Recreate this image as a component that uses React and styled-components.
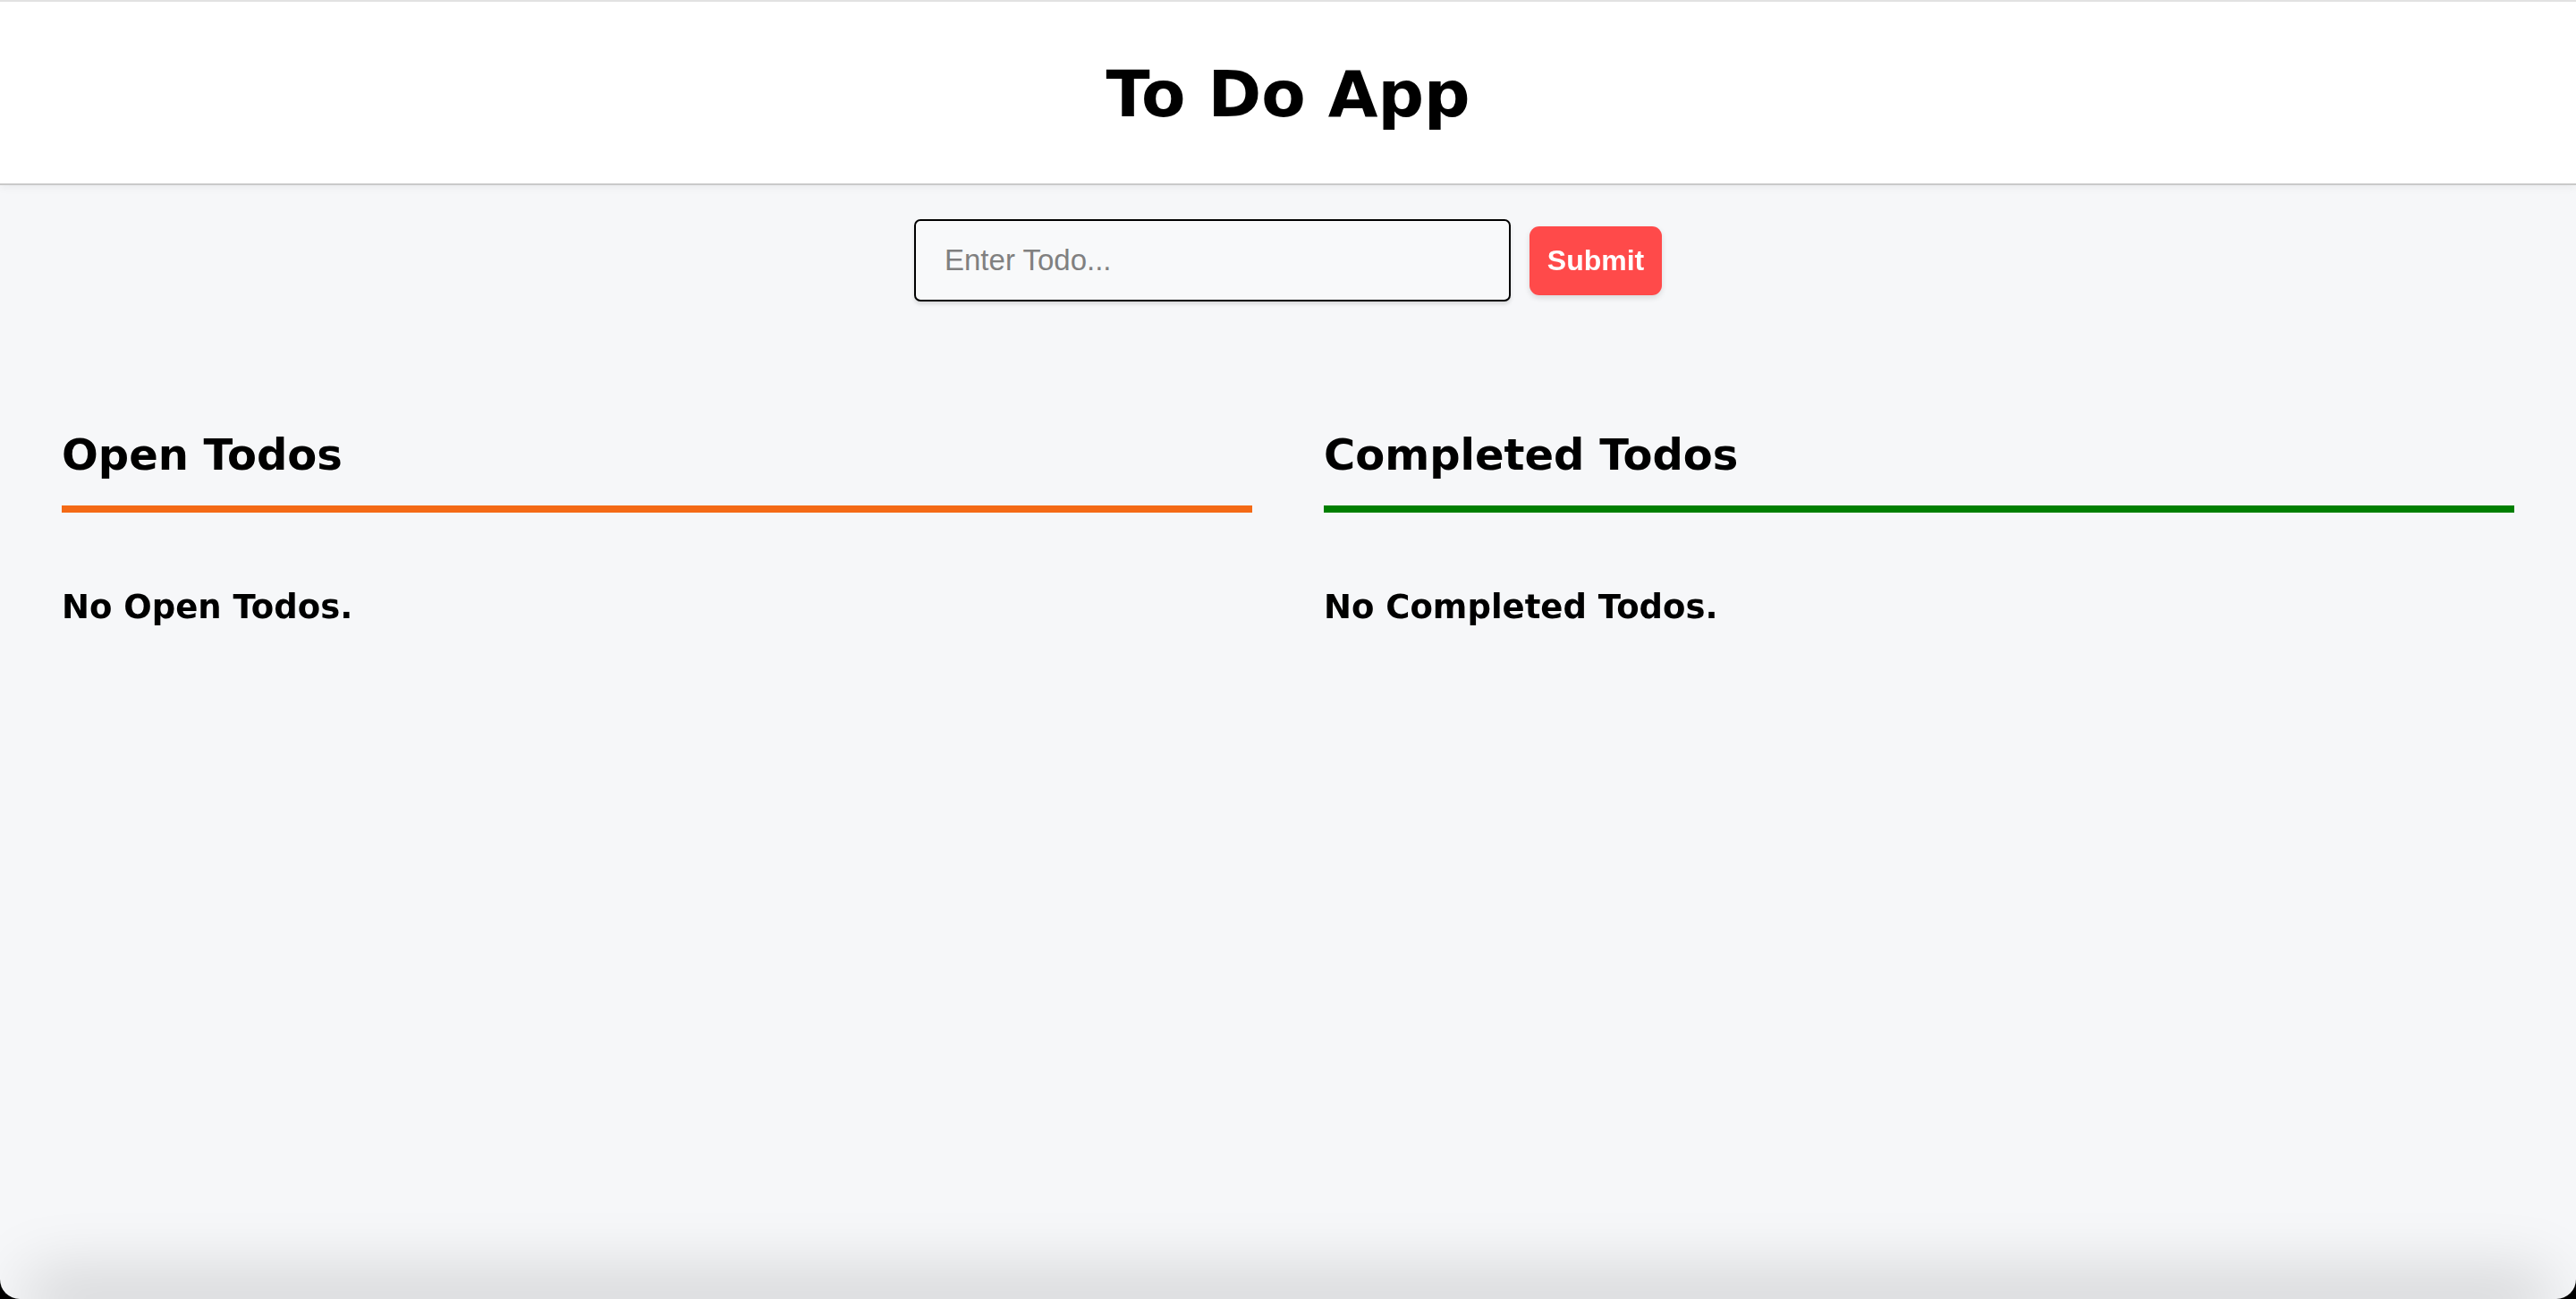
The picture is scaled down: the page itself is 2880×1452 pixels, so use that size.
import React from "react";
import styled, { createGlobalStyle } from "styled-components";

const GlobalStyle = createGlobalStyle`
  html, body {
    margin: 0;
    padding: 0;
    background: #000;
  }
  #root {
    min-height: 100vh;
  }
  * { box-sizing: border-box; }
`;

const Page = styled.div`
  min-height: 100vh;
  display: flex;
  flex-direction: column;
  background: #f6f7f9;
  border-radius: 0 0 22px 22px;
  overflow: hidden;
  font-family: "DejaVu Sans", Verdana, sans-serif;
  color: #000;
`;

const Header = styled.header`
  background: #fff;
  border-top: 2px solid #e2e2e2;
  height: 205px;
  padding-top: 67px;
  box-shadow: 0 2px 0 #c9c9c9, 0 4px 10px rgba(0, 0, 0, 0.06);
  position: relative;
  z-index: 1;
`;

const Title = styled.h1`
  margin: 0;
  text-align: center;
  font-size: 72px;
  line-height: 1;
  font-weight: 700;
`;

const Main = styled.main`
  flex: 1;
  display: flex;
  flex-direction: column;
`;

const Form = styled.form`
  display: flex;
  justify-content: center;
  align-items: center;
  gap: 21px;
  margin-top: 40px;
`;

const Input = styled.input`
  width: 667px;
  height: 92px;
  border: 2px solid #000;
  border-radius: 7px;
  background: #f8f9fa;
  padding: 0 32px;
  font-family: "Liberation Sans", Arial, sans-serif;
  font-size: 33px;
  color: #000;
  caret-color: #000;
  box-shadow: 0 3px 4px rgba(0, 0, 0, 0.12);
  outline: none;
  &::placeholder {
    color: #808080;
  }
`;

const SubmitButton = styled.button`
  width: 148px;
  height: 77px;
  border: none;
  border-radius: 11px;
  background: #ff4a4a;
  color: #fff;
  font-family: "Liberation Sans", Arial, sans-serif;
  font-weight: 700;
  font-size: 32px;
  box-shadow: 0 3px 6px rgba(0, 0, 0, 0.12);
  cursor: pointer;
`;

const Columns = styled.section`
  display: grid;
  grid-template-columns: 1fr 1fr;
  gap: 80px;
  padding: 0 69px;
  margin-top: 147px;
`;

const Column = styled.div`
  display: flex;
  flex-direction: column;
`;

const ColumnTitle = styled.h2`
  margin: 0;
  font-size: 48px;
  line-height: 1;
  font-weight: 700;
`;

const Divider = styled.div`
  height: 8px;
  margin-top: 33px;
  background: ${(p) => p.$color};
`;

const EmptyText = styled.p`
  margin: 87px 0 0;
  font-size: 37px;
  line-height: 1;
  font-weight: 700;
`;

const FooterShadow = styled.div`
  height: 0;
  margin: 0 60px;
  box-shadow: 0 0 70px 30px rgba(0, 0, 0, 0.15);
`;

export default function App() {
  return (
    <>
      <GlobalStyle />
      <Page>
        <Header>
          <Title>To Do App</Title>
        </Header>
        <Main>
          <Form onSubmit={(e) => e.preventDefault()}>
            <Input type="text" placeholder="Enter Todo..." autoFocus />
            <SubmitButton type="submit">Submit</SubmitButton>
          </Form>
          <Columns>
            <Column>
              <ColumnTitle>Open Todos</ColumnTitle>
              <Divider $color="#f46a16" />
              <EmptyText>No Open Todos.</EmptyText>
            </Column>
            <Column>
              <ColumnTitle>Completed Todos</ColumnTitle>
              <Divider $color="#007f00" />
              <EmptyText>No Completed Todos.</EmptyText>
            </Column>
          </Columns>
        </Main>
        <FooterShadow />
      </Page>
    </>
  );
}
